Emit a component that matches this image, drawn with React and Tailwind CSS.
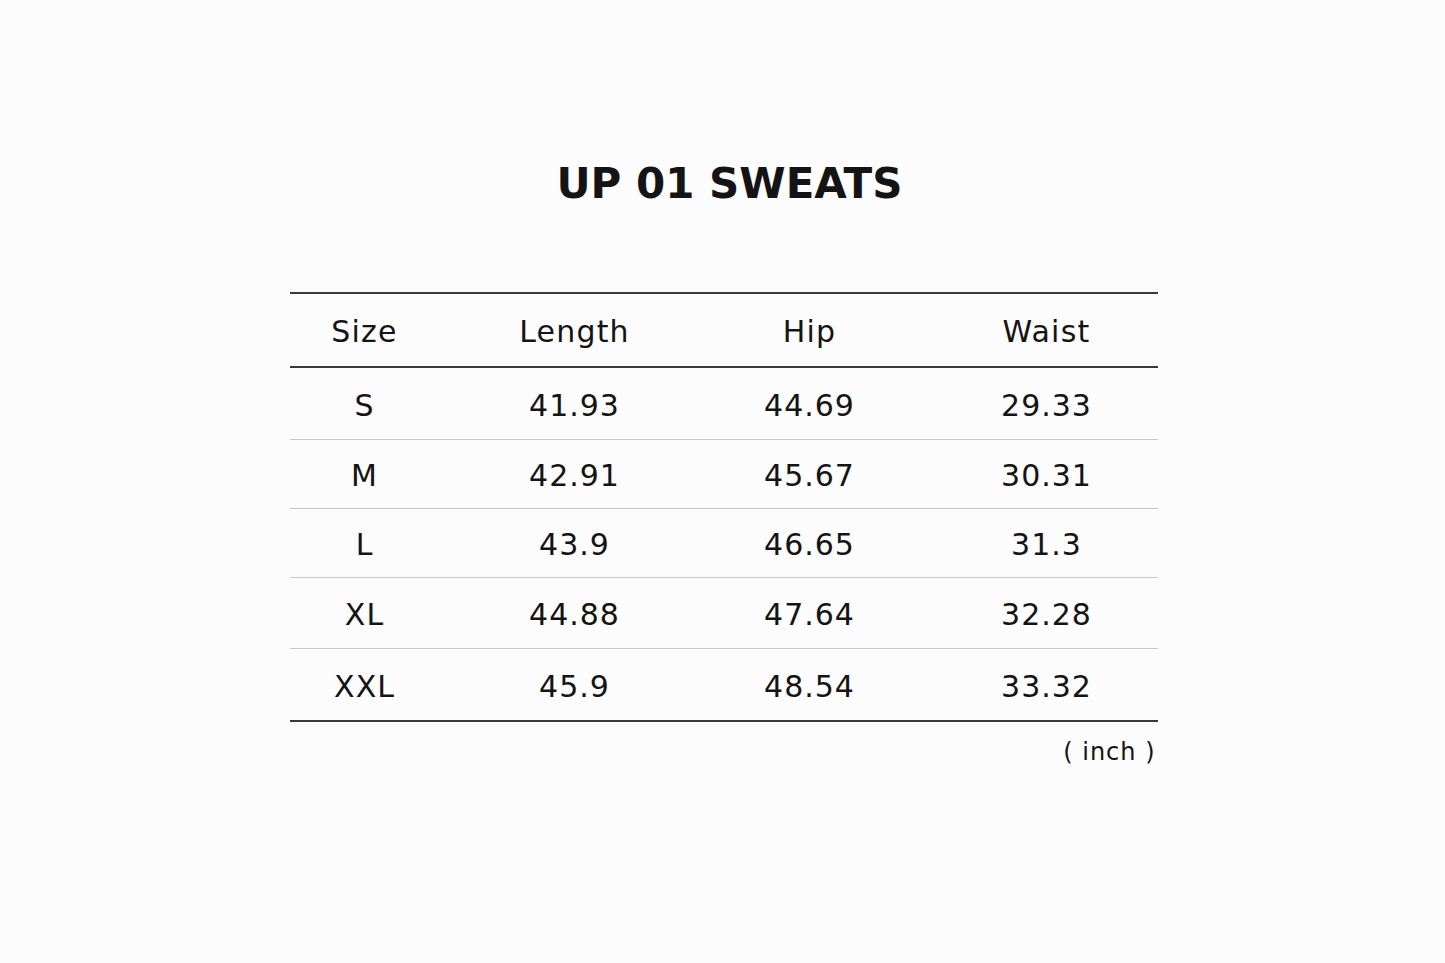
const rows = [
  ["S", "41.93", "44.69", "29.33", "h-[72px]"],
  ["M", "42.91", "45.67", "30.31", "h-[69px]"],
  ["L", "43.9", "46.65", "31.3", "h-[69px]"],
  ["XL", "44.88", "47.64", "32.28", "h-[71px]"],
  ["XXL", "45.9", "48.54", "33.32", "h-[73px]"],
];

const cols = "grid grid-cols-[150px_270px_200px_248px] items-center text-center pt-[3px]";

export default function App() {
  return (
    <div className="min-h-[963px] w-full bg-[#fcfcfc] text-[#141414] font-['DejaVu_Sans',sans-serif] flex flex-col items-center">
      <h1 className="mt-[159px] ml-[14px] text-[42px] leading-[50px] font-bold">
        UP 01 SWEATS
      </h1>

      <div className="mt-[83px] w-[868px] ml-[2px]">
        <div className={`${cols} h-[76px] border-t-2 border-b-2 border-[#3a3a3a] text-[30px] tracking-[1.2px]`}>
          <div>Size</div>
          <div>Length</div>
          <div>Hip</div>
          <div className="pl-[26px]">Waist</div>
        </div>

        {rows.map(([size, length, hip, waist, h], i) => (
          <div
            key={size}
            className={`${cols} ${h} text-[30px] tracking-[1px] ${
              i === rows.length - 1 ? "border-b-2 border-[#3a3a3a]" : "border-b border-[#c8c8c8]"
            }`}
          >
            <div>{size}</div>
            <div>{length}</div>
            <div>{hip}</div>
            <div className="pl-[26px]">{waist}</div>
          </div>
        ))}

        <div className="flex justify-end pt-[12px] pr-[2px] text-[24px] tracking-[1px]">( inch )</div>
      </div>
    </div>
  );
}
